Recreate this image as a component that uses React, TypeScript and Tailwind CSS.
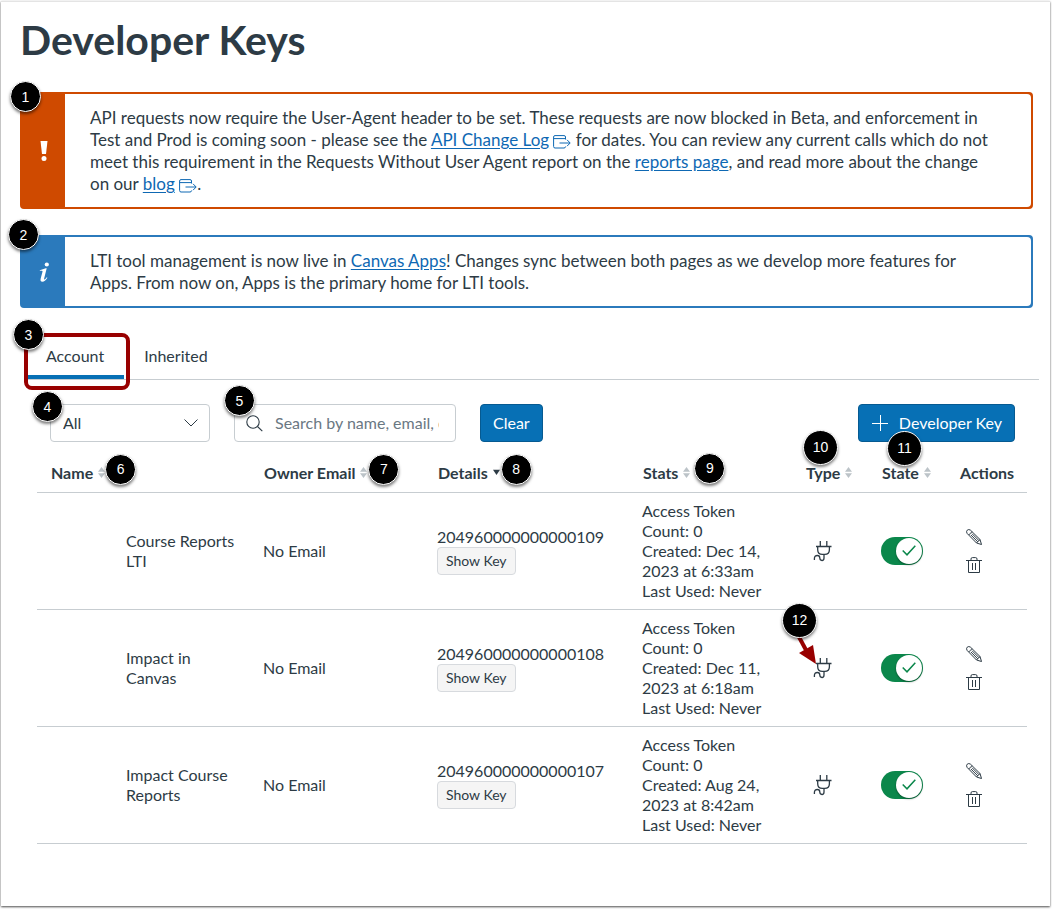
import type { ReactNode } from 'react';

type IconProps = { className?: string };

function ExternalIcon() {
  return (
    <svg viewBox="0 0 18 14" className="inline-block h-[14px] w-[18px] align-[-3px]" fill="none" stroke="currentColor" aria-hidden="true">
      <path d="M12.5 4.5V2Q12.5.6 11 .6H2Q.6.6.6 2v9.5Q.6 13 2 13h9q1.500 0 1.500-1.500M.6 3.600h12M6.500 8h10.500M14 4.800 17.200 8 14 11.200" />
    </svg>
  );
}

function PlugIcon() {
  return (
    <svg viewBox="0 0 20 22" className="h-[22px] w-5" fill="none" stroke="currentColor" strokeWidth="1.300" aria-hidden="true">
      <path d="M7.300 1v5.500M13.800 1v5.500M3 6.500h15.500M4.700 6.500v3.200q0 4.700 4.700 4.700h2.300q4.700 0 4.700-4.700V6.500M11 14.400v3.600q0 2.500-2 2.500-2.200 0-2.200-2.400 0-2.600-2.400-2.600-3 0-3 3v1.600" />
    </svg>
  );
}

function PencilIcon() {
  return (
    <svg viewBox="0 0 16 16" className="size-4" fill="none" stroke="currentColor" aria-hidden="true">
      <path d="M1.200 4.500Q-.2 2.700 1.200 1.200 2.700-.2 4.500 1.200L14 10.500l1.500 5-5-1.500zM2.700 6l3.300-3.300M4.800 5.900l7 7M6 4.700l7 7M10.500 14l3.500-3.500" />
    </svg>
  );
}

function TrashIcon() {
  return (
    <svg viewBox="0 0 16 16" className="size-4" fill="none" stroke="currentColor" aria-hidden="true">
      <path d="M0 3.500h16M5 3.500V2q0-1.400 1.400-1.400h3.200Q11 .6 11 2v1.500M2.500 3.500v12h11v-12M6.500 6v7M9.500 6v7" />
    </svg>
  );
}

function SearchIcon({ className }: IconProps) {
  return (
    <svg viewBox="0 0 17 17" className={className} fill="none" stroke="currentColor" strokeWidth="1.100" aria-hidden="true">
      <circle cx="7" cy="7" r="6.200" />
      <path d="m11.500 11.500 4.800 4.600" />
    </svg>
  );
}

function SortIcon() {
  return (
    <svg viewBox="0 0 7 11" className="h-[11px] w-[7px] text-[#bcc3c8]" fill="currentColor" aria-hidden="true">
      <path d="M3.500 0l3.500 4.700H0zM3.500 11l3.500-4.700H0z" />
    </svg>
  );
}

function SortDownIcon() {
  return (
    <svg viewBox="0 0 7 11" className="h-[11px] w-[7px]" fill="currentColor" aria-hidden="true">
      <path d="M3.500 8l3.500-5.200H0z" />
    </svg>
  );
}

function Marker({ n, className }: { n: number; className: string }) {
  return (
    <span
      className={`absolute z-10 flex items-center justify-center rounded-full border border-white bg-black font-['Liberation_Sans',sans-serif] text-sm font-normal leading-none text-white shadow-[0_2px_3px_rgba(0,0,0,0.5)] ${n > 9 ? 'size-[35px]' : 'size-[31px]'} ${className}`}
    >
      {n}
    </span>
  );
}

function Alert({ tone, icon, marker, children }: { tone: 'warning' | 'info'; icon: ReactNode; marker: ReactNode; children: ReactNode }) {
  const colors = tone === 'warning' ? 'border-[#cf4a00] bg-[#cf4a00]' : 'border-[#2b7abc] bg-[#2b7abc]';
  return (
    <div role="alert" className={`relative flex rounded border-2 ${colors}`}>
      {marker}
      <div className="flex w-[43px] shrink-0 items-center justify-center text-white">{icon}</div>
      <p className="grow rounded-r-sm bg-white pb-3 pl-[25px] pr-10 pt-[13px] text-[17px] leading-[22px]">{children}</p>
    </div>
  );
}

function TextLink({ children }: { children: ReactNode }) {
  return (
    <a href="#" className="text-[#0e68b3] underline underline-offset-2">
      {children}
    </a>
  );
}

const columns = [
  { label: 'Name', width: 'w-[214px]', pad: 'pl-[14px]', sort: 'both', marker: <Marker n={6} className="-top-[9px] left-full" /> },
  { label: 'Owner Email', width: 'w-[174px]', pad: 'pl-[13px]', sort: 'both', marker: <Marker n={7} className="-top-[9px] left-full ml-px" /> },
  { label: 'Details', width: 'w-[205px]', pad: 'pl-[13px]', sort: 'down', marker: <Marker n={8} className="-top-[9px] left-full ml-px" /> },
  { label: 'Stats', width: 'w-[163px]', pad: 'pl-[13px]', sort: 'both', marker: <Marker n={9} className="-top-[10px] left-full ml-1" /> },
  { label: 'Type', width: 'w-[76px]', pad: 'pl-[13px]', sort: 'both', marker: <Marker n={10} className="-left-[3px] -top-[33px]" /> },
  { label: 'State', width: 'w-[78px]', pad: 'pl-[13px]', sort: 'both', marker: <Marker n={11} className="left-[5px] -top-[32px]" /> },
  { label: 'Actions', width: 'w-[80px]', pad: 'pl-[13px]', sort: 'none', marker: null },
];

const keys = [
  { name: 'Course Reports LTI', id: '204960000000000109', created: 'Dec 14, 2023 at 6:33am' },
  { name: 'Impact in Canvas', id: '204960000000000108', created: 'Dec 11, 2023 at 6:18am' },
  { name: 'Impact Course Reports', id: '204960000000000107', created: 'Aug 24, 2023 at 8:42am' },
];

export default function App() {
  return (
    <div className="min-h-screen bg-white p-px pb-[3px] pr-[2px] font-['Lato',sans-serif] text-base leading-5 text-[#2d3b45]">
      <main className="min-h-[905px] border-t border-[#e4e4e4] bg-white pl-[19px] pr-[17px] pt-[14px] shadow-[0_1px_2px_rgba(0,0,0,0.7)]">
        <h1 className="text-[41px] font-bold leading-[48px]">Developer Keys</h1>

        <div className="mt-7 flex flex-col gap-[26px]">
          <Alert
            tone="warning"
            marker={<Marker n={1} className="-left-[12px] -top-[13px]" />}
            icon={
              <svg viewBox="0 0 8 20" className="h-5 w-2" fill="currentColor" aria-hidden="true">
                <path d="M.5 0h7L6 13H2z" />
                <circle cx="4" cy="17.500" r="2.500" />
              </svg>
            }
          >
            API requests now require the User-Agent header to be set. These requests are now blocked in Beta, and enforcement in Test and Prod is coming
            soon - please see the <TextLink>API Change Log</TextLink>{' '}
            <a href="#" aria-label="Open API Change Log in a new window" className="text-[#0e68b3]"><ExternalIcon /></a> for dates. You can review any
            current calls which do not meet this requirement in the Requests Without User Agent report on the <TextLink>reports page</TextLink>, and read
            more about the change on our <TextLink>blog</TextLink>{' '}
            <a href="#" aria-label="Open blog in a new window" className="text-[#0e68b3]"><ExternalIcon /></a>.
          </Alert>
          <Alert
            tone="info"
            marker={<Marker n={2} className="-left-[14px] -top-[18px]" />}
            icon={
              <svg viewBox="0 0 10 20" className="h-5 w-[10px]" fill="currentColor" aria-hidden="true">
                <circle cx="7.800" cy="2.500" r="2.100" />
                <path d="M.8 8.200 6.800 6.300h.9L5.200 16.200q-.4 1.600.4 1.300.9-.4 2.200-2.200l.6.4Q5.900 19.700 3.400 19.700q-2.500 0-1.700-3.200L3.500 9.700q.3-1-.7-1H.8z" />
              </svg>
            }
          >
            LTI tool management is now live in <TextLink>Canvas Apps</TextLink>! Changes sync between both pages as we develop more features for Apps. From
            now on, Apps is the primary home for LTI tools.
          </Alert>
        </div>

        <div role="tablist" className="-mr-[6px] ml-2 mt-[27px] flex border-b border-[#c7cdd1]">
          <div className="relative">
            <button role="tab" aria-selected="true" className="h-11 border-b-4 border-[#0770b5] pl-[18px] pr-5 pt-[2px]">
              Account
            </button>
            <span className="pointer-events-none absolute -bottom-[11px] -left-1 -right-[6px] -top-[2px] rounded-lg border-4 border-[#980000]" />
            <Marker n={3} className="-left-[15px] -top-[16px]" />
          </div>
          <button role="tab" aria-selected="false" className="h-11 border-b-4 border-transparent px-5 pt-[2px]">
            Inherited
          </button>
        </div>

        <div className="ml-[30px] mr-[18px] mt-6 flex gap-6">
          <div className="relative">
            <label>
              <span className="sr-only">Filter by type</span>
              <select className="h-[38px] w-40 appearance-none rounded border border-[#c7cdd1] bg-white px-3">
                <option>All</option>
              </select>
            </label>
            <svg viewBox="0 0 14 8" className="pointer-events-none absolute right-3 top-[15px] h-2 w-[14px]" fill="none" stroke="currentColor" aria-hidden="true">
              <path d="m.5.5 6.500 6.500L13.500.5" />
            </svg>
            <Marker n={4} className="-left-[18px] -top-[13px]" />
          </div>
          <div className="relative flex h-[38px] w-[222px] items-center gap-3 rounded border border-[#c7cdd1] pl-[11px] pr-4">
            <SearchIcon className="size-[17px] shrink-0" />
            <input aria-label="Search" placeholder="Search by name, email, or ID" className="min-w-0 grow outline-none placeholder:text-[#6a7883]" />
            <Marker n={5} className="-left-[11px] -top-[20px]" />
          </div>
          <button className="h-[38px] rounded border border-[#065a91] bg-[#0770b5] px-3 text-white">Clear</button>
          <button className="ml-auto flex h-[38px] items-center gap-[10px] rounded border border-[#065a91] bg-[#0770b5] px-3 text-white">
            <svg viewBox="0 0 18 18" className="size-[18px]" fill="none" stroke="currentColor" aria-hidden="true">
              <path d="M9.500 1v16M1 9.500h16" />
            </svg>
            Developer Key
          </button>
        </div>

        <div className="ml-[17px] mr-[6px] mt-3">
          <table className="w-full table-fixed border-collapse text-left">
            <thead>
              <tr className="h-[38px] border-b border-[#c7cdd1]">
                {columns.map((c) => (
                  <th key={c.label} scope="col" className={`p-0 align-middle font-bold ${c.width} ${c.pad}`}>
                    <div className="relative flex w-fit items-center gap-[5px]">
                      {c.label}
                      {c.sort === 'both' && <SortIcon />}
                      {c.sort === 'down' && <SortDownIcon />}
                      {c.marker}
                    </div>
                  </th>
                ))}
              </tr>
            </thead>
            <tbody>
              {keys.map((k, i) => (
                <tr key={k.id} className="border-b border-[#c7cdd1]">
                  <td className="py-2 pl-[89px] pr-3">{k.name}</td>
                  <td className="px-3 py-2">No Email</td>
                  <td className="px-3 py-2">
                    <div>{k.id}</div>
                    <button className="h-7 rounded border border-[#d7dade] bg-[#f5f5f5] px-2 text-sm">Show Key</button>
                  </td>
                  <td className="px-3 py-2">
                    <div>Access Token Count: 0</div>
                    <div>Created: {k.created}</div>
                    <div>Last Used: Never</div>
                  </td>
                  <td className="py-2 pl-5">
                    <div className="relative w-fit">
                      <PlugIcon />
                      {i === 1 && (
                        <>
                          <svg viewBox="0 0 24 32" className="absolute -left-[18px] -top-[23px] h-8 w-6" aria-hidden="true">
                            <path d="M4 3l7 13" stroke="#980000" strokeWidth="4" />
                            <path d="M4 19l14-8 3 19z" fill="#980000" />
                          </svg>
                          <Marker n={12} className="-left-[31px] -top-[54px]" />
                        </>
                      )}
                    </div>
                  </td>
                  <td className="py-2 pl-3">
                    <label className="relative flex h-7 w-[42px] items-center justify-end rounded-full bg-[#0b874b] p-px">
                      <input type="checkbox" defaultChecked aria-label={`${k.name} state`} className="absolute inset-0 size-full opacity-0" />
                      <span className="flex size-[26px] items-center justify-center rounded-full bg-white text-[#0b874b] shadow-[0_1px_2px_rgba(0,0,0,0.4)]">
                        <svg viewBox="0 0 14 11" className="h-[11px] w-[14px]" fill="none" stroke="currentColor" strokeWidth="1.500" aria-hidden="true">
                          <path d="m.7 5.500 4.300 4.300L13.300.8" />
                        </svg>
                      </span>
                    </label>
                  </td>
                  <td className="py-2 pl-[19px]">
                    <div className="flex flex-col gap-3">
                      <button aria-label={`Edit ${k.name}`} className="w-fit"><PencilIcon /></button>
                      <button aria-label={`Delete ${k.name}`} className="w-fit"><TrashIcon /></button>
                    </div>
                  </td>
                </tr>
              ))}
            </tbody>
          </table>
        </div>
      </main>
    </div>
  );
}
